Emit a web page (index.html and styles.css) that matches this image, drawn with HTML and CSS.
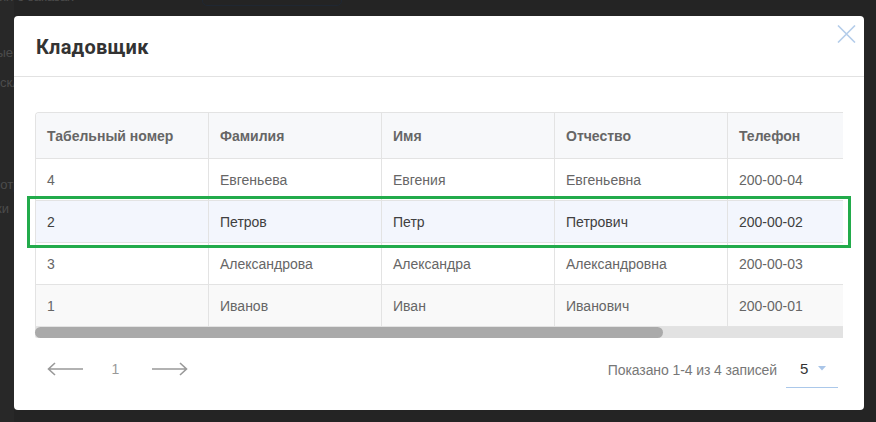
FILE: index.html
```html
<!DOCTYPE html>
<html lang="ru">
<head>
<meta charset="utf-8">
<title>Кладовщик</title>
<link rel="stylesheet" href="styles.css">
</head>
<body>
<div class="page">
  <div class="page-top">
    <span class="bg-text top-text">Сведения о заказах</span>
    <span class="bg-field"></span>
  </div>
  <div class="page-side">
    <span class="bg-text side-a">Данные</span>
    <span class="bg-text side-b">склад</span>
    <span class="bg-text side-c">Просмотр</span>
    <span class="bg-text side-d">Заявки</span>
  </div>
</div>

<div class="modal">
  <div class="modal-header">
    <h1 class="modal-title">Кладовщик</h1>
    <button class="modal-close" aria-label="Закрыть">
      <svg width="19" height="18" viewBox="0 0 19 18"><path d="M1 0.5 L18 17.5 M18 0.5 L1 17.5" stroke="#b4cdea" stroke-width="1.6" fill="none"/></svg>
    </button>
  </div>
  <div class="modal-body">
    <div class="table-wrap">
      <table class="grid">
        <thead>
          <tr><th>Табельный номер</th><th>Фамилия</th><th>Имя</th><th>Отчество</th><th>Телефон</th><th>Склад</th></tr>
        </thead>
        <tbody>
          <tr><td>4</td><td>Евгеньева</td><td>Евгения</td><td>Евгеньевна</td><td>200-00-04</td><td>Основной</td></tr>
          <tr class="selected"><td>2</td><td>Петров</td><td>Петр</td><td>Петрович</td><td>200-00-02</td><td>Основной</td></tr>
          <tr><td>3</td><td>Александрова</td><td>Александра</td><td>Александровна</td><td>200-00-03</td><td>Основной</td></tr>
          <tr class="striped"><td>1</td><td>Иванов</td><td>Иван</td><td>Иванович</td><td>200-00-01</td><td>Основной</td></tr>
        </tbody>
      </table>
    </div>
    <div class="hscroll"><div class="hscroll-thumb" style="width: 628px"></div></div>
    <div class="focus-box"></div>
    <div class="modal-footer">
      <div class="pager">
        <svg class="arrow" width="37" height="14" viewBox="0 0 37 14"><path d="M1 7 H36 M8 1 L1.5 7 L8 13" stroke="#999" stroke-width="1.6" fill="none"/></svg>
        <span class="page-num">1</span>
        <svg class="arrow" width="37" height="14" viewBox="0 0 37 14"><path d="M1 7 H36 M29 1 L35.5 7 L29 13" stroke="#999" stroke-width="1.6" fill="none"/></svg>
      </div>
      <div class="summary">
        <span class="count">Показано 1-4 из 4 записей</span>
        <div class="size-select">
          <span class="size-value">5</span>
          <svg width="8" height="5" viewBox="0 0 8 5"><path d="M0 0 H8 L4 4.5 Z" fill="#a9c5e8"/></svg>
        </div>
      </div>
    </div>
  </div>
</div>
</body>
</html>
```

FILE: styles.css
```css
* { box-sizing: border-box; }

html, body {
  margin: 0;
  height: 100%;
}

body {
  background: #242424;
  font-family: "Liberation Sans", Arial, sans-serif;
  overflow: hidden;
}

.page {
  display: flex;
  flex-direction: column;
  height: 100%;
  background: linear-gradient(to right, #282828 0, #282828 14px, #242424 14px);
}

.page-top {
  display: flex;
  height: 8px;
}

.bg-text {
  color: #4c4c4c;
  font-size: 13px;
  line-height: 18px;
  white-space: nowrap;
}

.top-text {
  margin-top: -12px;
  margin-left: -46px;
}

.bg-field {
  width: 140px;
  height: 20px;
  margin-top: -14px;
  border: 1px solid #1f2732;
  border-radius: 5px;
  margin-left: 128px;
}

.page-side {
  display: flex;
  flex-direction: column;
  align-items: flex-start;
  padding-top: 36px;
}

.side-a { margin-left: -34px; }
.side-b { margin-left: 0; margin-top: 12px; }
.side-c { margin-left: -39px; margin-top: 84px; }
.side-d { margin-left: -33px; margin-top: 6px; }

.modal {
  position: fixed;
  left: 14px;
  top: 16px;
  width: 850px;
  height: 394px;
  background: #fff;
  border-radius: 4px;
  display: flex;
  flex-direction: column;
}

.modal-header {
  height: 61px;
  border-bottom: 1px solid #e2e2e2;
  display: flex;
  align-items: center;
  justify-content: space-between;
  padding: 0 8px 0 22px;
}

.modal-title {
  margin: 0;
  font-family: Roboto, "Liberation Sans", sans-serif;
  font-weight: 700;
  font-size: 20px;
  color: #333;
  letter-spacing: 0.2px;
  padding-top: 2px;
}

.modal-close {
  border: 0;
  background: none;
  padding: 0;
  align-self: flex-start;
  margin-top: 9px;
  display: block;
  line-height: 0;
}

.modal-body {
  padding: 35px 21px 0 21px;
  position: relative;
  flex: 1;
  display: flex;
  flex-direction: column;
}

.table-wrap {
  width: 808px;
  overflow: hidden;
  border-top: 1px solid #e3e3e3;
  border-left: 1px solid #e3e3e3;
  border-top-left-radius: 4px;
}

.grid {
  border-collapse: separate;
  border-spacing: 0;
  table-layout: fixed;
  width: 1038px;
  font-size: 14px;
}

.grid th,
.grid td {
  width: 173px;
  border-right: 1px solid #e3e3e3;
  border-bottom: 1px solid #e3e3e3;
  text-align: left;
  padding: 0 11px;
  white-space: nowrap;
  overflow: hidden;
}

.grid th {
  height: 46px;
  background: #f7f8fa;
  color: #666;
  font-weight: 700;
}

.grid td {
  height: 42px;
  color: #666;
}

.grid tr.striped td {
  background: #f9f9f9;
}

.grid tr.selected td {
  background: #f3f6fd;
  color: #404040;
}

.hscroll {
  width: 808px;
  height: 11px;
  background: #e2e2e2;
  border-bottom-left-radius: 2px;
}

.hscroll-thumb {
  height: 11px;
  background: #aaaaaa;
  border-radius: 6px;
}

.focus-box {
  position: absolute;
  left: 13px;
  top: 119px;
  width: 824px;
  height: 52px;
  border: 3px solid #22ab4b;
  pointer-events: none;
}

.modal-footer {
  display: flex;
  justify-content: space-between;
  align-items: center;
  padding: 12px 5px 0 12px;
}

.pager {
  display: flex;
  align-items: center;
}

.arrow { display: block; }

.page-num {
  color: #999;
  font-size: 14px;
  width: 67px;
  text-align: center;
  padding-right: 4px;
}

.summary {
  display: flex;
  align-items: center;
  gap: 9px;
}

.count {
  color: #777;
  font-size: 14px;
  letter-spacing: -0.1px;
  padding-top: 2px;
}

.size-select {
  width: 52px;
  height: 32px;
  border-bottom: 1px solid #abc8ea;
  display: flex;
  align-items: center;
  padding-left: 14px;
  gap: 10px;
  margin-top: 6px;
  padding-bottom: 6px;
}

.size-value {
  color: #333;
  font-size: 15px;
}
```
